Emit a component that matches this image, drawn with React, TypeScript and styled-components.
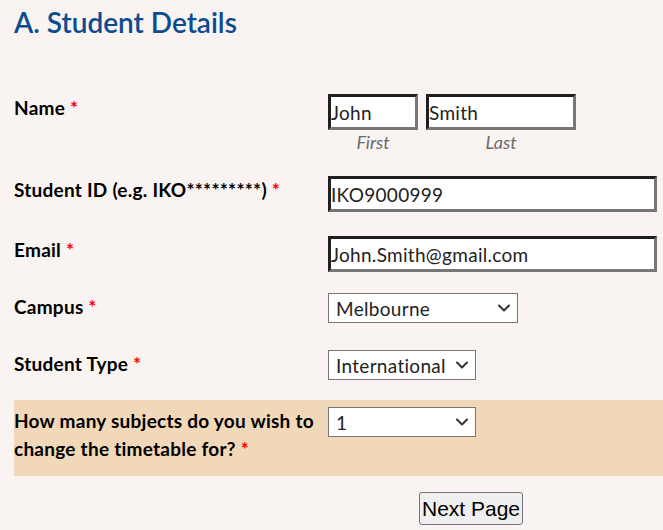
import styled, { createGlobalStyle } from 'styled-components';

const GlobalStyle = createGlobalStyle`
	html, body {
		margin: 0;
		padding: 0;
		background: #f9f4f1;
	}
	body {
		font-family: Lato, "Noto Sans", sans-serif;
		color: #000;
	}
`;

type SelectProps = {
	width: number;
	value: string;
	options: string[];
};

function Dropdown({ width, value, options }: SelectProps) {
	return (
		<SelectWrap $width={width}>
			<Select defaultValue={value}>
				{options.map(o => <option key={o}>{o}</option>)}
			</Select>
			<Chevron viewBox="0 0 12 8" aria-hidden="true">
				<path d="M1 1.5 L6 6.5 L11 1.5" />
			</Chevron>
		</SelectWrap>
	);
}

export default function App() {
	return (
		<>
			<GlobalStyle />
			<Page>
				<Heading>A. Student Details</Heading>
				<Form>
					<Row $min={82}>
						<Label>Name <Star>*</Star></Label>
						<NameGroup>
							<NamePart>
								<TextInput defaultValue="John" $width={90} />
								<SubLabel>First</SubLabel>
							</NamePart>
							<NamePart>
								<TextInput defaultValue="Smith" $width={150} />
								<SubLabel>Last</SubLabel>
							</NamePart>
						</NameGroup>
					</Row>
					<Row $min={60}>
						<Label>Student ID (e.g. IKO*********) <Star>*</Star></Label>
						<TextInput defaultValue="IKO9000999" $width={329} />
					</Row>
					<Row>
						<Label>Email <Star>*</Star></Label>
						<TextInput defaultValue="John.Smith@gmail.com" $width={329} />
					</Row>
					<Row>
						<Label>Campus <Star>*</Star></Label>
						<Dropdown width={190} value="Melbourne" options={['Melbourne', 'Sydney', 'Brisbane']} />
					</Row>
					<Row>
						<Label>Student Type <Star>*</Star></Label>
						<Dropdown width={148} value="International" options={['International', 'Domestic']} />
					</Row>
					<Row $highlight>
						<Label>How many subjects do you wish to change the timetable for? <Star>*</Star></Label>
						<Dropdown width={148} value="1" options={['1', '2', '3', '4']} />
					</Row>
				</Form>
				<Footer>
					<NextButton type="button">Next Page</NextButton>
				</Footer>
			</Page>
		</>
	);
}

const Page = styled.div`
	padding: 0 0 0 14px;
`;

const Heading = styled.h1`
	margin: 0;
	padding-top: 4px;
	font-family: Lato, "Noto Sans", sans-serif;
	font-weight: 600;
	font-size: 28px;
	line-height: 36px;
	color: #0b4b8f;
`;

const Form = styled.div`
	margin-top: 47px;
	display: flex;
	flex-direction: column;
`;

const Row = styled.div<{ $highlight?: boolean; $min?: number }>`
	display: grid;
	grid-template-columns: 314px 1fr;
	align-items: start;
	min-height: ${props => props.$min ?? 57}px;
	box-sizing: border-box;
	padding: 7px 0 ${props => (props.$highlight ? '13px' : '0')};
	background: ${props => (props.$highlight ? '#f0d8b9' : 'transparent')};
`;

const Label = styled.div`
	font-weight: 700;
	font-size: 19px;
	letter-spacing: 0.25px;
	line-height: 28px;
	padding-right: 6px;
`;

const Star = styled.span`
	color: #f00;
`;

const NameGroup = styled.div`
	display: flex;
	gap: 8px;
`;

const NamePart = styled.div`
	display: flex;
	flex-direction: column;
	align-items: center;
`;

const TextInput = styled.input<{ $width: number }>`
	width: ${props => props.$width}px;
	height: 36px;
	box-sizing: border-box;
	padding: 0;
	border: 3px solid;
	border-color: #1f1f1f #767676 #767676 #1f1f1f;
	background: #fff;
	font-family: Lato, "Noto Sans", sans-serif;
	font-size: 19px;
	letter-spacing: 0.3px;
	color: #222;
	outline: none;
`;

const SubLabel = styled.span`
	font-style: italic;
	font-size: 18px;
	line-height: 24px;
	color: #6b6b6b;
`;

const SelectWrap = styled.div<{ $width: number }>`
	position: relative;
	width: ${props => props.$width}px;
	height: 30px;
`;

const Select = styled.select`
	appearance: none;
	width: 100%;
	height: 100%;
	box-sizing: border-box;
	border: 1px solid #767676;
	border-radius: 0;
	background: #fff;
	padding: 0 28px 0 7px;
	font-family: Lato, "Noto Sans", sans-serif;
	font-size: 19px;
	letter-spacing: 0.3px;
	color: #222;
	outline: none;
`;

const Chevron = styled.svg`
	position: absolute;
	right: 8px;
	top: 11px;
	width: 12px;
	height: 8px;
	pointer-events: none;
	fill: none;
	stroke: #333;
	stroke-width: 2;
	stroke-linecap: round;
	stroke-linejoin: round;
`;

const Footer = styled.div`
	padding: 16px 0 0 405px;
`;

const NextButton = styled.button`
	width: 104px;
	height: 33px;
	padding: 0;
	font-family: "Liberation Sans", Arial, sans-serif;
	font-size: 21px;
	color: #000;
	background: #efefef;
	border: 1px solid #767676;
	border-radius: 3px;
`;
